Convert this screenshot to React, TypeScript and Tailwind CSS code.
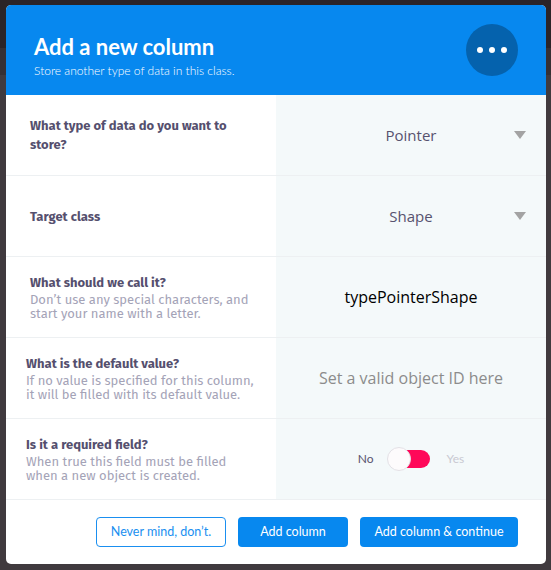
import React from 'react';

const Caret = () => (
  <svg className="absolute right-[20px] top-1/2 -translate-y-1/2" width="12" height="8" viewBox="0 0 12 8">
    <path d="M0 0 L12 0 L6 8 Z" fill="#a3a3a3" />
  </svg>
);

const Label = ({ children }: { children: React.ReactNode }) => (
  <div className="text-[13px] leading-[19px] font-bold text-[#554f6e]" style={{ fontFamily: '"Fira Sans", "Noto Sans", sans-serif' }}>
    {children}
  </div>
);

const Desc = ({ children }: { children: React.ReactNode }) => (
  <div className="mt-[1px] text-[13px] leading-[14px] text-[#a4a3b7]" style={{ fontFamily: '"Fira Sans", "Noto Sans", sans-serif' }}>
    {children}
  </div>
);

const Row = ({ left, right, pad = 'pl-[24px]' }: { left: React.ReactNode; right: React.ReactNode; pad?: string }) => (
  <div className="grid grid-cols-2 h-[81px] border-b border-[#edf0f2]">
    <div className={`flex flex-col justify-center bg-white ${pad}`}>{left}</div>
    <div className="relative flex items-center justify-center bg-[#f4f9fa] font-['Open_Sans',sans-serif] text-[15px]">{right}</div>
  </div>
);

export default function App() {
  return (
    <div className="relative h-[570px] w-full overflow-hidden bg-[#403a3e]">
      <div className="h-[48px] bg-[#2b2428]" />
      <div className="h-[27px] bg-[#363034]" />

      {/* modal */}
      <div className="absolute left-[6px] top-[5px] w-[540px] overflow-hidden rounded-[5px] bg-white">
        <div className="flex h-[90px] justify-between bg-[#0788ef] px-[28px] font-['Lato',sans-serif] text-white">
          <div className="pt-[28px]">
            <div className="text-[22px] leading-[28px] font-bold">Add a new column</div>
            <div className="mt-[2px] text-[12px] leading-[16px] font-light">Store another type of data in this class.</div>
          </div>
          <div className="flex h-[52px] w-[52px] items-center justify-center gap-[6px] self-center rounded-full bg-[#0562ad]">
            <span className="h-[6px] w-[6px] rounded-full bg-white" />
            <span className="h-[6px] w-[6px] rounded-full bg-white" />
            <span className="h-[6px] w-[6px] rounded-full bg-white" />
          </div>
        </div>

        <Row
          left={<Label>What type of data do you want to<br />store?</Label>}
          right={<><span className="text-[#57526f]">Pointer</span><Caret /></>}
        />
        <Row
          left={<Label>Target class</Label>}
          right={<><span className="text-[#57526f]">Shape</span><Caret /></>}
        />
        <Row
          left={<><Label>What should we call it?</Label><Desc>Don’t use any special characters, and<br />start your name with a letter.</Desc></>}
          right={<span className="text-[16px] text-black">typePointerShape</span>}
        />
        <Row
          pad="pl-[20px]"
          left={<><Label>What is the default value?</Label><Desc>If no value is specified for this column,<br />it will be filled with its default value.</Desc></>}
          right={<span className="text-[16px] text-[#8c8c8c]">Set a valid object ID here</span>}
        />
        <Row
          pad="pl-[20px]"
          left={<><Label>Is it a required field?</Label><Desc>When true this field must be filled<br />when a new object is created.</Desc></>}
          right={
            <div className="flex items-center font-['Lato',sans-serif] text-[12px]">
              <span className="text-[#59546f]">No</span>
              <div className="relative ml-[13px] h-[24px] w-[43px]">
                <div className="absolute right-0 top-[3px] h-[18px] w-[34px] rounded-full bg-[#ff0859]" />
                <div className="absolute left-0 top-0 h-[24px] w-[24px] rounded-full border border-[#e3e1e6] bg-[#fdfbfc]" />
              </div>
              <span className="ml-[17px] text-[#c9c9d2]">Yes</span>
            </div>
          }
        />

        <div className="flex h-[64px] items-center justify-end gap-[12px] pr-[28px] font-['Lato',sans-serif] text-[12.5px]">
          <button className="h-[30px] w-[130px] rounded-[4px] border border-[#1a8ff0] bg-white text-[#1a8ff0]">Never mind, don’t.</button>
          <button className="h-[30px] w-[110px] rounded-[4px] bg-[#0788ef] text-white">Add column</button>
          <button className="h-[30px] w-[158px] rounded-[4px] bg-[#0788ef] text-white">Add column &amp; continue</button>
        </div>
      </div>
    </div>
  );
}
